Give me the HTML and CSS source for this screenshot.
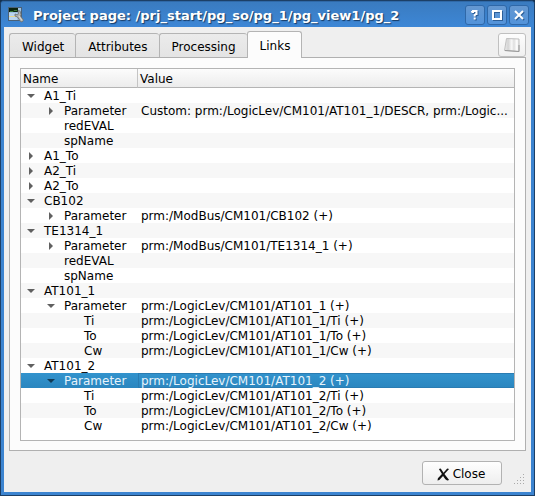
FILE: index.html
```html
<!DOCTYPE html>
<html lang="en">
<head>
<meta charset="utf-8">
<title>Project page</title>
<link rel="stylesheet" href="styles.css">
</head>
<body>
<div class="window">
  <header class="titlebar">
    <svg class="app-icon" viewBox="0 0 16 16" aria-hidden="true">
      <rect x="0.5" y="0.5" width="13" height="13" fill="#9fc0e0" stroke="#4a6178"/>
      <rect x="1" y="1" width="9" height="4" fill="#0c2410"/>
      <path d="M2 4.500h3l1-1h3" stroke="#3b7a35" fill="none"/>
      <path d="M1 6h8v7H1z" fill="#b9d4ee"/>
      <path d="M1 9.500h7" stroke="#e8d68c"/>
      <path d="M7 7l2.500 1 1-1.500-.5-3 2 .5 1 3.500-.5 1.500 3 4-1.500 2-1.500-.5-3-4.500-2.500-1z" fill="#b4b4b0" stroke="#6a6c6c" stroke-width="0.8"/>
      <path d="M11 9l3 4.500" stroke="#dcdcd8"/>
    </svg>
    <h1 class="title">Project page: /prj_start/pg_so/pg_1/pg_view1/pg_2</h1>
    <div class="window-buttons">
      <button class="window-button" aria-label="Help"><svg viewBox="0 0 18 18"><path class="shade" d="M6 6.500V6h1V5h3.500v3H10L8.700 9v1.500M8.700 11.500v2" transform="translate(1 1)"/><path d="M6 6.500V6h1V5h3.500v3H10L8.700 9v1.500M8.700 11.500v2"/></svg></button>
      <button class="window-button" aria-label="Maximize"><svg viewBox="0 0 18 18"><path class="shade" d="M6 6h8v8H6z"/><path d="M5 5h8v8H5z"/></svg></button>
      <button class="window-button" aria-label="Close window"><svg viewBox="0 0 18 18"><path class="shade" d="M6 6l8 8M14 6l-8 8"/><path d="M5 5l8 8M13 5l-8 8"/></svg></button>
    </div>
  </header>
  <main class="content">
    <div class="tabbar">
      <div class="tabs" role="tablist">
        <button class="tab" role="tab" aria-selected="false">Widget</button>
        <button class="tab" role="tab" aria-selected="false">Attributes</button>
        <button class="tab" role="tab" aria-selected="false">Processing</button>
        <button class="tab active" role="tab" aria-selected="true">Links</button>
      </div>
      <button class="corner-button" aria-label="Page view">
        <svg viewBox="0 0 16 16">
          <defs><linearGradient id="sheet"><stop offset="0" stop-color="#eee"/><stop offset="0.25" stop-color="#d4d4d4"/><stop offset="0.5" stop-color="#f8f8f8"/><stop offset="0.65" stop-color="#dedede"/><stop offset="0.85" stop-color="#fff"/><stop offset="1" stop-color="#e4e4e4"/></linearGradient></defs>
          <path d="M2.500 1.500L15 2v12.500L0.500 13.500z" fill="url(#sheet)" stroke="#c0c0c0"/>
          <path d="M1 13.500l14 1V8" fill="none" stroke="#989898"/>
        </svg>
      </button>
    </div>
    <section class="pane" role="tabpanel">
      <div class="tree">
        <table>
          <colgroup><col class="name-col"><col></colgroup>
          <thead><tr><th>Name</th><th>Value</th></tr></thead>
          <tbody>
            <tr><td><button class="toggle open" aria-label="Collapse"></button>A1_Ti</td><td></td></tr>
            <tr class="level-2"><td><button class="toggle" aria-label="Expand"></button>Parameter</td><td>Custom: prm:/LogicLev/CM101/AT101_1/DESCR, prm:/Logic...</td></tr>
            <tr class="level-2 leaf"><td>redEVAL</td><td></td></tr>
            <tr class="level-2 leaf"><td>spName</td><td></td></tr>
            <tr><td><button class="toggle" aria-label="Expand"></button>A1_To</td><td></td></tr>
            <tr><td><button class="toggle" aria-label="Expand"></button>A2_Ti</td><td></td></tr>
            <tr><td><button class="toggle" aria-label="Expand"></button>A2_To</td><td></td></tr>
            <tr><td><button class="toggle open" aria-label="Collapse"></button>CB102</td><td></td></tr>
            <tr class="level-2"><td><button class="toggle" aria-label="Expand"></button>Parameter</td><td>prm:/ModBus/CM101/CB102 (+)</td></tr>
            <tr><td><button class="toggle open" aria-label="Collapse"></button>TE1314_1</td><td></td></tr>
            <tr class="level-2"><td><button class="toggle" aria-label="Expand"></button>Parameter</td><td>prm:/ModBus/CM101/TE1314_1 (+)</td></tr>
            <tr class="level-2 leaf"><td>redEVAL</td><td></td></tr>
            <tr class="level-2 leaf"><td>spName</td><td></td></tr>
            <tr><td><button class="toggle open" aria-label="Collapse"></button>AT101_1</td><td></td></tr>
            <tr class="level-2"><td><button class="toggle open" aria-label="Collapse"></button>Parameter</td><td>prm:/LogicLev/CM101/AT101_1 (+)</td></tr>
            <tr class="level-3 leaf"><td>Ti</td><td>prm:/LogicLev/CM101/AT101_1/Ti (+)</td></tr>
            <tr class="level-3 leaf"><td>To</td><td>prm:/LogicLev/CM101/AT101_1/To (+)</td></tr>
            <tr class="level-3 leaf"><td>Cw</td><td>prm:/LogicLev/CM101/AT101_1/Cw (+)</td></tr>
            <tr><td><button class="toggle open" aria-label="Collapse"></button>AT101_2</td><td></td></tr>
            <tr class="level-2 selected"><td><button class="toggle open" aria-label="Collapse"></button>Parameter</td><td>prm:/LogicLev/CM101/AT101_2 (+)</td></tr>
            <tr class="level-3 leaf"><td>Ti</td><td>prm:/LogicLev/CM101/AT101_2/Ti (+)</td></tr>
            <tr class="level-3 leaf"><td>To</td><td>prm:/LogicLev/CM101/AT101_2/To (+)</td></tr>
            <tr class="level-3 leaf"><td>Cw</td><td>prm:/LogicLev/CM101/AT101_2/Cw (+)</td></tr>
          </tbody>
        </table>
      </div>
    </section>
    <footer class="footer">
      <button class="close-button">
        <svg viewBox="0 0 14 14" aria-hidden="true"><path d="M2 1l2-.5 3 4.500 4-4.500 2 .5-5 5.500 4 5 1 1.500-2 .5L9 12 6.500 8.500 2.500 13l-2 .5L1 11l4.300-4.500z" fill="#111"/></svg>
        Close
      </button>
      <svg class="grip" viewBox="0 0 12 12" aria-hidden="true"><path d="M9 1.500h1M9 4.500h1M6 4.500h1M9 7.500h1M6 7.500h1M3 7.500h1M9 10.500h1M6 10.500h1M3 10.500h1M0 10.500h1"/></svg>
    </footer>
  </main>
</div>
</body>
</html>
```
FILE: styles.css
```css
* {
  box-sizing: border-box;
}

body {
  margin: 0;
  background: #16304d;
  font: 12px/15px "DejaVu Sans", sans-serif;
  color: #000;
}

button {
  margin: 0;
  padding: 0;
  font: inherit;
  color: inherit;
}

svg {
  display: block;
}

.window {
  display: flex;
  flex-direction: column;
  min-height: 100vh;
  padding: 0 3px 3px;
  border: 1px solid #1c3f66;
  border-radius: 4px 4px 0 0;
  background: #3c84d0;
}

.titlebar {
  display: flex;
  align-items: center;
  height: 26px;
  margin: 0 -3px;
  padding: 0 5px 0 7px;
  border-top: 1px solid #2f69a8;
  border-radius: 3px 3px 0 0;
  background: linear-gradient(#3a7bc0, #3d87d6);
}

.app-icon {
  width: 16px;
  height: 16px;
}

.title {
  flex: 1;
  min-width: 0;
  margin: 0 0 0 9px;
  padding-top: 2px;
  overflow: hidden;
  font-size: 13px;
  line-height: 18px;
  white-space: nowrap;
  color: #fff;
  text-shadow: 1px 1px 1px #173a63;
}

.window-buttons {
  display: flex;
  gap: 2px;
}

.window-button {
  width: 20px;
  height: 20px;
  border: 1px solid #2f68a8;
  border-radius: 3px;
  background: linear-gradient(#6598d1, #5293da);
}

.window-button svg {
  width: 18px;
  height: 18px;
}

.window-button path {
  fill: none;
  stroke: #fff;
  stroke-width: 2;
}

.window-button .shade {
  stroke: #2d5f98;
}

.content {
  display: flex;
  flex: 1;
  flex-direction: column;
  padding: 4px 5px 7px;
  background: #efefef;
}

.tabbar,
.tabs {
  display: flex;
  align-items: flex-end;
}

.tabbar {
  justify-content: space-between;
}

.tab {
  height: 24px;
  padding: 3px 11px 0 12px;
  border: 1px solid #b4b4b4;
  border-right: 0;
  border-bottom: 0;
  border-radius: 3px 3px 0 0;
  background: linear-gradient(#ebebeb, #e4e4e4);
}

.tab.active {
  position: relative;
  height: 27px;
  margin-bottom: -1px;
  border-right: 1px solid #b4b4b4;
  background: #fcfcfc;
}

.corner-button {
  display: grid;
  place-items: center;
  width: 28px;
  height: 24px;
  border: 1px solid #c0c0c0;
  border-radius: 3px;
  background: linear-gradient(#fdfdfd, #f0f0f0);
}

.corner-button svg {
  width: 16px;
  height: 16px;
}

.pane {
  display: flex;
  flex: 1;
  padding: 10px 10px 9px;
  border: 1px solid #b0b0b0;
  background: #fcfcfc;
}

.tree {
  flex: 1;
  min-width: 0;
  padding-bottom: 7px;
  border: 1px solid #b4b4b4;
  background: #fff;
}

table {
  width: 100%;
  table-layout: fixed;
  border-collapse: separate;
  border-spacing: 0;
}

.name-col {
  width: 117px;
}

th {
  height: 19px;
  padding: 3px 2px 0;
  border-bottom: 1px solid #b4b4b4;
  background: linear-gradient(#fcfcfc, #ececec);
  font-weight: normal;
  text-align: left;
}

th:first-child {
  border-right: 1px solid #c4c4c4;
}

td {
  height: 15px;
  padding: 1px 3px 0;
  overflow: hidden;
  line-height: 14px;
  white-space: nowrap;
}

td:first-child {
  padding: 1px 0 0 3px;
}

.level-2 td:first-child {
  padding-left: 23px;
}

.leaf.level-2 td:first-child {
  padding-left: 43px;
}

.leaf.level-3 td:first-child {
  padding-left: 63px;
}

tbody tr:nth-child(even) {
  background: #f7f7f7;
}

tbody .selected:nth-child(even) {
  background: linear-gradient(#3293cd, #2b86bf);
  color: #e6f3fb;
}

.selected td:last-child {
  box-shadow: inset 1px 1px #2a7cb2, inset 0 -1px #2a7cb2;
}

.toggle {
  display: inline-grid;
  place-items: center;
  width: 14px;
  height: 14px;
  margin-right: 6px;
  border: 0;
  background: none;
  color: #606060;
  vertical-align: top;
}

.toggle::before {
  content: "";
  border: 4px solid transparent;
  border-right-width: 0;
  border-left-color: currentColor;
}

.toggle.open::before {
  border: 4px solid transparent;
  border-top-color: currentColor;
  border-bottom-width: 0;
}

.selected .toggle {
  color: #103a56;
}

.footer {
  display: flex;
  align-items: flex-end;
  justify-content: flex-end;
  gap: 12px;
  padding-top: 10px;
}

.close-button {
  display: flex;
  align-items: center;
  justify-content: center;
  gap: 3px;
  width: 80px;
  height: 24px;
  padding: 2px 2px 0 0;
  border: 1px solid #b2b2b2;
  border-radius: 3px;
  background: linear-gradient(#fefefe, #eee);
}

.close-button svg {
  width: 13px;
  height: 13px;
}

.grip {
  width: 12px;
  height: 12px;
}

.grip path {
  stroke: #aaa;
  stroke-width: 1;
}
```
